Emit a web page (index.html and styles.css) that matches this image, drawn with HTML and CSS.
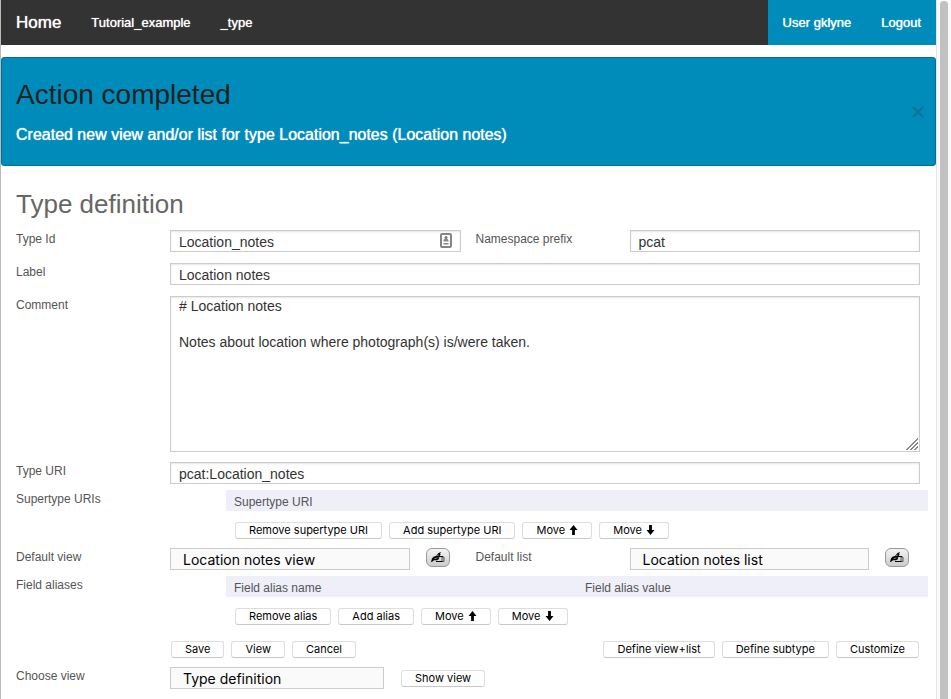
FILE: index.html
```
<!DOCTYPE html>
<html lang="en">
<head>
<meta charset="utf-8">
<title>Type definition</title>
<link rel="stylesheet" href="styles.css">
</head>
<body>
<svg class="symbols" aria-hidden="true">
  <symbol id="up" viewBox="0 0 8 10"><path d="M4 0 8 5H5.4V10H2.6V5H0z"/></symbol>
  <symbol id="down" viewBox="0 0 8 10"><path d="M4 10 8 5H5.4V0H2.6V5H0z"/></symbol>
  <symbol id="write" viewBox="0 0 14 12">
    <path d="M0 10 1 6.500 2.500 4.800 5 4 7.500 1 10.200 0 8.800 2 9.800 2.600 8.600 3.800 9.400 4.600 7.600 5.800 8.200 7 6 8.200 3 8.200 1.200 9.800z"/>
    <path d="M3.500 6.800 6.500 5.800M5.800 3.800 8 2.800" stroke="#ddd" stroke-width=".6" fill="none"/>
    <path d="M8 4.500H12M5 9.500H11.500" fill="none" stroke="#000" stroke-width="1"/>
    <path d="M11 5V9.500H13V5z" fill="#ccc" stroke="#222" stroke-width=".7"/>
  </symbol>
</svg>
<div class="page">
  <nav class="nav">
    <a class="home" href="#">Home</a>
    <a href="#">Tutorial_example</a>
    <a href="#">_type</a>
    <div class="account"><a href="#">User gklyne</a><a href="#">Logout</a></div>
  </nav>

  <section class="alert">
    <div>
      <h2>Action completed</h2>
      <p>Created new view and/or list for type Location_notes (Location notes)</p>
    </div>
    <button class="close" type="button" aria-label="Close"><svg viewBox="0 0 10 10"><path d="M0 0 10 10M10 0 0 10"/></svg></button>
  </section>

  <form class="form">
    <h1>Type definition</h1>
    <div class="row">
      <label for="type-id">Type Id</label>
      <div class="id-field">
        <input id="type-id" type="text" value="Location_notes">
        <svg class="card" viewBox="0 0 12 15"><rect x="1" y="1" width="10" height="13" rx="1" fill="#fff" stroke="#858585" stroke-width="2"/><circle cx="6" cy="4.500" r="1.500" fill="#777"/><path d="M3.500 8.500V7L5 5.500h2L8.500 7v1.500zM3.500 10h5v1.500h-5z" fill="#888"/></svg>
      </div>
      <label for="prefix">Namespace prefix</label>
      <input id="prefix" type="text" value="pcat">
    </div>
    <div class="row">
      <label for="label">Label</label>
      <input class="wide" id="label" type="text" value="Location notes">
    </div>
    <div class="row comment">
      <label for="comment">Comment</label>
      <textarea class="wide" id="comment" rows="8"># Location notes

Notes about location where photograph(s) is/were taken.</textarea>
    </div>
    <div class="row tight">
      <label for="uri">Type URI</label>
      <input class="wide" id="uri" type="text" value="pcat:Location_notes">
    </div>
    <div class="row group">
      <span class="caption">Supertype URIs</span>
      <div class="repeat">
        <table><thead><tr><th>Supertype URI</th></tr></thead></table>
        <div class="buttons">
          <button type="button">Remove supertype URI</button>
          <button type="button">Add supertype URI</button>
          <button type="button">Move <svg class="arrow"><use href="#up"/></svg></button>
          <button type="button">Move <svg class="arrow"><use href="#down"/></svg></button>
        </div>
      </div>
    </div>
    <div class="row tight">
      <label for="view">Default view</label>
      <div class="pick">
        <select id="view"><option>Location notes view</option></select>
        <button class="edit" type="button" aria-label="Edit view"><svg><use href="#write"/></svg></button>
      </div>
      <label for="list">Default list</label>
      <div class="pick">
        <select id="list"><option>Location notes list</option></select>
        <button class="edit" type="button" aria-label="Edit list"><svg><use href="#write"/></svg></button>
      </div>
    </div>
    <div class="row aliases">
      <span class="caption">Field aliases</span>
      <div class="repeat">
        <table><thead><tr><th>Field alias name</th><th>Field alias value</th></tr></thead></table>
        <div class="buttons">
          <button type="button">Remove alias</button>
          <button type="button">Add alias</button>
          <button type="button">Move <svg class="arrow"><use href="#up"/></svg></button>
          <button type="button">Move <svg class="arrow"><use href="#down"/></svg></button>
        </div>
      </div>
    </div>
    <div class="row group">
      <div class="buttons actions">
        <button type="button">Save</button>
        <button type="button">View</button>
        <button type="button">Cancel</button>
        <button class="push" type="button">Define view+list</button>
        <button type="button">Define subtype</button>
        <button type="button">Customize</button>
      </div>
    </div>
    <div class="row">
      <label for="choose">Choose view</label>
      <div class="wide choose">
        <select id="choose"><option>Type definition</option></select>
        <button type="button">Show view</button>
      </div>
    </div>
  </form>
</div>
<div class="scrollbar" aria-hidden="true"></div>
</body>
</html>
```
FILE: styles.css
```
* { box-sizing: border-box; }

body {
  margin: 0;
  display: flex;
  min-height: 100vh;
  background: #fff;
  color: #555;
  font: 12px/18px "Liberation Sans", Arial, sans-serif;
}

.symbols { display: none; }

.page {
  flex: 1;
  min-width: 0;
  border-left: 1px solid #bbb;
}

.scrollbar {
  width: 15px;
  padding: 1px 3px 0;
  border-left: 1px solid #e6e6e6;
  background: #fafafa;
  display: flex;
}
.scrollbar::before {
  content: "";
  flex: 1;
  border-radius: 4px 4px 0 0;
  background: #c1c1c1;
}

/* Navigation */
.nav {
  display: flex;
  align-items: center;
  gap: 30px;
  height: 45px;
  padding-left: 15px;
  background: #333;
}
.nav a {
  color: #fff;
  font-size: 13px;
  text-decoration: none;
  text-shadow: 0 0 1px #fff;
}
.nav .home { font-size: 17px; }
.account {
  display: flex;
  align-items: center;
  align-self: stretch;
  gap: 30px;
  margin-left: auto;
  padding: 0 15px;
  background: #008cba;
}

/* Alert */
.alert {
  display: flex;
  align-items: center;
  justify-content: space-between;
  margin-top: 12px;
  padding: 17px 12px 17px 14px;
  border: 1px solid #007095;
  border-radius: 3px;
  background: #008cba;
}
.alert h2 {
  margin: 0 0 7px;
  color: #222;
  font-size: 28px;
  font-weight: 400;
  line-height: 40px;
}
.alert p {
  margin: 0;
  color: #fff;
  font-size: 16px;
  line-height: 26px;
  text-shadow: 0 0 1px #fff;
}
.close {
  height: auto;
  padding: 0;
  border: 0;
  background: none;
}
.close svg {
  display: block;
  width: 10px;
  height: 10px;
  overflow: visible;
  fill: none;
  stroke: #0b7398;
  stroke-width: 2;
}

/* Form */
.form { padding: 20px 16px 8px 15px; }
h1 {
  margin: 0 0 8px;
  color: #666;
  font-size: 26px;
  font-weight: 400;
  line-height: 36px;
}
.row {
  display: grid;
  grid-template-columns: 139px 1fr 139px 1fr;
  column-gap: 15px;
  align-items: start;
  margin-bottom: 11px;
}
.tight { margin-bottom: 6px; }
.group { margin-bottom: 9px; }
.comment { margin-bottom: 10px; }
.aliases { margin-bottom: 16px; }
.wide { grid-column: 2 / -1; }

input, textarea, select {
  width: 100%;
  min-width: 0;
  height: 22px;
  margin: 0;
  padding: 1px 8px 0;
  border: 1px solid #ccc;
  border-radius: 0;
  background: #fff;
  box-shadow: inset 0 1px 2px rgba(0, 0, 0, .1);
  color: #333;
  font: 14px/18px "Liberation Sans", Arial, sans-serif;
}
textarea {
  display: block;
  height: 156px;
  padding-top: 0;
  resize: vertical;
}
textarea::-webkit-resizer {
  background: linear-gradient(135deg, transparent 50%, #888 50% 58%, transparent 58% 66%, #888 66% 74%, transparent 74% 82%, #888 82% 90%, transparent 90%) right 1px bottom 1px / 13px 13px no-repeat;
}
select {
  appearance: none;
  padding: 1px 12px 0;
  background: #fafafa;
  box-shadow: none;
  color: #000;
  font: 14px/20px Inter, sans-serif;
}

.id-field { position: relative; }
.card {
  position: absolute;
  top: 3px;
  right: 9px;
  width: 12px;
  height: 15px;
}

button {
  height: 17px;
  padding: 0 13px;
  border: 1px solid #ddd;
  border-bottom-color: #c8c8c8;
  border-radius: 3px;
  background: #fff;
  color: #000;
  font: 11px/15px Inter, sans-serif;
  white-space: nowrap;
}
.arrow {
  width: 9px;
  height: 10px;
  margin-left: 1px;
  vertical-align: -1px;
}
.buttons { display: flex; gap: 7px; }
.actions { grid-column: 2 / -1; padding: 0 1px; }
.push { margin-left: auto; }

.repeat {
  grid-column: 2 / -1;
  margin: 0 -8px 0 56px;
}
.repeat .buttons { padding: 11px 9px 0; }
table {
  width: 100%;
  table-layout: fixed;
  border-collapse: collapse;
  background: #efeff9;
}
th {
  padding: 4px 8px 0;
  font-weight: 400;
  line-height: 17px;
  text-align: left;
}

.pick {
  display: flex;
  gap: 16px;
  padding-right: 11px;
}
.edit {
  flex: none;
  width: 24px;
  height: 19px;
  padding: 0;
  border-color: #999;
  border-radius: 6px;
  background: linear-gradient(#f4f4f4, #ccc);
}
.edit svg {
  display: block;
  width: 14px;
  height: 12px;
  margin: 0 auto;
}
.choose { display: flex; align-items: center; gap: 17px; }
.choose select { width: 214px; }
```
